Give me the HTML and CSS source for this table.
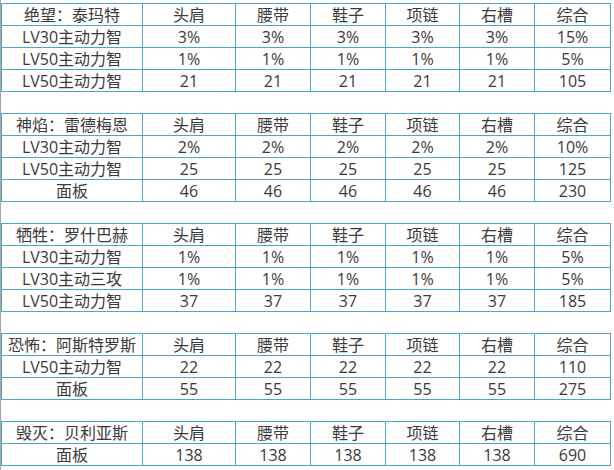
FILE: index.html
```html
<!DOCTYPE html>
<html lang="zh">
<head>
<meta charset="utf-8">
<link rel="stylesheet" href="styles.css">
</head>
<body>
<div class="page">
<table class="grid">
<colgroup><col class="c1"><col class="c2"><col class="c3"><col class="c4"><col class="c5"><col class="c6"><col class="c7"></colgroup>
<tr><td>绝望：泰玛特</td><td>头肩</td><td>腰带</td><td>鞋子</td><td>项链</td><td>右槽</td><td>综合</td></tr>
<tr><td>LV30主动力智</td><td>3%</td><td>3%</td><td>3%</td><td>3%</td><td>3%</td><td>15%</td></tr>
<tr><td>LV50主动力智</td><td>1%</td><td>1%</td><td>1%</td><td>1%</td><td>1%</td><td>5%</td></tr>
<tr><td>LV50主动力智</td><td>21</td><td>21</td><td>21</td><td>21</td><td>21</td><td>105</td></tr>
</table>
<table class="grid">
<colgroup><col class="c1"><col class="c2"><col class="c3"><col class="c4"><col class="c5"><col class="c6"><col class="c7"></colgroup>
<tr><td>神焰：雷德梅恩</td><td>头肩</td><td>腰带</td><td>鞋子</td><td>项链</td><td>右槽</td><td>综合</td></tr>
<tr><td>LV30主动力智</td><td>2%</td><td>2%</td><td>2%</td><td>2%</td><td>2%</td><td>10%</td></tr>
<tr><td>LV50主动力智</td><td>25</td><td>25</td><td>25</td><td>25</td><td>25</td><td>125</td></tr>
<tr><td>面板</td><td>46</td><td>46</td><td>46</td><td>46</td><td>46</td><td>230</td></tr>
</table>
<table class="grid">
<colgroup><col class="c1"><col class="c2"><col class="c3"><col class="c4"><col class="c5"><col class="c6"><col class="c7"></colgroup>
<tr><td>牺牲：罗什巴赫</td><td>头肩</td><td>腰带</td><td>鞋子</td><td>项链</td><td>右槽</td><td>综合</td></tr>
<tr><td>LV30主动力智</td><td>1%</td><td>1%</td><td>1%</td><td>1%</td><td>1%</td><td>5%</td></tr>
<tr><td>LV30主动三攻</td><td>1%</td><td>1%</td><td>1%</td><td>1%</td><td>1%</td><td>5%</td></tr>
<tr><td>LV50主动力智</td><td>37</td><td>37</td><td>37</td><td>37</td><td>37</td><td>185</td></tr>
</table>
<table class="grid">
<colgroup><col class="c1"><col class="c2"><col class="c3"><col class="c4"><col class="c5"><col class="c6"><col class="c7"></colgroup>
<tr><td>恐怖：阿斯特罗斯</td><td>头肩</td><td>腰带</td><td>鞋子</td><td>项链</td><td>右槽</td><td>综合</td></tr>
<tr><td>LV50主动力智</td><td>22</td><td>22</td><td>22</td><td>22</td><td>22</td><td>110</td></tr>
<tr><td>面板</td><td>55</td><td>55</td><td>55</td><td>55</td><td>55</td><td>275</td></tr>
</table>
<table class="grid">
<colgroup><col class="c1"><col class="c2"><col class="c3"><col class="c4"><col class="c5"><col class="c6"><col class="c7"></colgroup>
<tr><td>毁灭：贝利亚斯</td><td>头肩</td><td>腰带</td><td>鞋子</td><td>项链</td><td>右槽</td><td>综合</td></tr>
<tr><td>面板</td><td>138</td><td>138</td><td>138</td><td>138</td><td>138</td><td>690</td></tr>
</table>
</div>
</body>
</html>
```
FILE: styles.css
```css
html, body {
  margin: 0;
  padding: 0;
  background: #ffffff;
}
.page {
  box-sizing: border-box;
  min-height: 470px;
  border-left: 1px solid #a6a6a6;
  padding-top: 3px;
  font-family: "Open Sans", "Noto Sans CJK SC", sans-serif;
  font-size: 16px;
  color: #3a3a3a;
}
.grid {
  border-collapse: collapse;
  table-layout: fixed;
  width: 610px;
  margin-bottom: 21px;
}
.grid td {
  border: 1px solid #4aa8c5;
  height: 21px;
  padding: 0;
  line-height: 20px;
  text-align: center;
  white-space: nowrap;
  overflow: hidden;
}
.c1 { width: 141px; }
.c2 { width: 93px; }
.c3 { width: 75px; }
.c4 { width: 75px; }
.c5 { width: 74px; }
.c6 { width: 75px; }
.c7 { width: 76px; }
```
